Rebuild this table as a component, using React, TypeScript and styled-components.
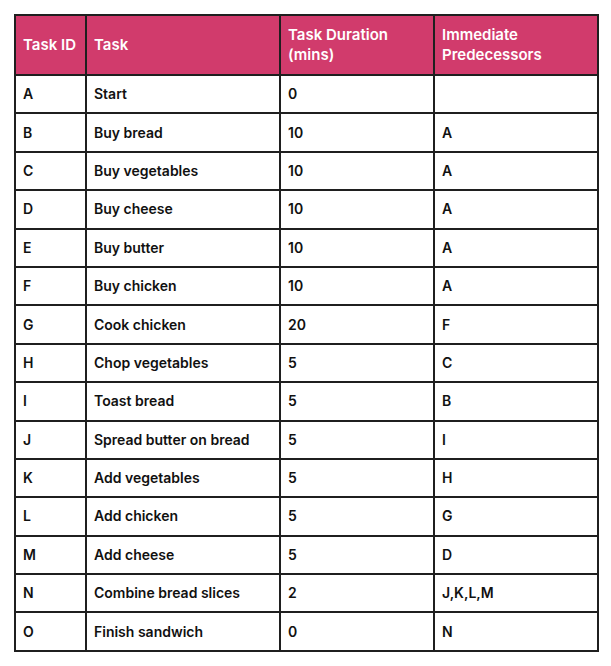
import React, { FC } from 'react';
import styled, { createGlobalStyle } from 'styled-components';

const GlobalStyle = createGlobalStyle`
  body {
    margin: 0;
    background: #ffffff;
    font-family: Inter, "Noto Sans", sans-serif;
  }
`;

const Page = styled.div`
  padding: 14px 0 0 14px;
`;

const Table = styled.table`
  width: 583px;
  border-collapse: collapse;
  table-layout: fixed;
  color: #111111;
`;

const Col = styled.col<{ $width: number }>`
  width: ${(p) => p.$width}px;
`;

const HeadRow = styled.tr`
  height: 60px;
  background: #d13b6c;
`;

const BodyRow = styled.tr`
  height: 38.4px;
`;

const HeadCell = styled.th`
  border: 2px solid #1f1f1f;
  padding: 0 7px;
  text-align: left;
  vertical-align: middle;
  color: #ffffff;
  font-size: 15px;
  font-weight: 600;
  line-height: 20px;
`;

const Cell = styled.td`
  border: 2px solid #1f1f1f;
  padding: 0 7px;
  vertical-align: middle;
  font-size: 14px;
  font-weight: 600;
  line-height: 18px;
  white-space: nowrap;
`;

type TTask = {
  id: string;
  task: string;
  duration: number;
  predecessors: string;
};

const columns = [
  { title: 'Task ID', width: 71 },
  { title: 'Task', width: 194 },
  { title: 'Task Duration (mins)', width: 154 },
  { title: 'Immediate Predecessors', width: 164 },
];

const tasks: TTask[] = [
  { id: 'A', task: 'Start', duration: 0, predecessors: '' },
  { id: 'B', task: 'Buy bread', duration: 10, predecessors: 'A' },
  { id: 'C', task: 'Buy vegetables', duration: 10, predecessors: 'A' },
  { id: 'D', task: 'Buy cheese', duration: 10, predecessors: 'A' },
  { id: 'E', task: 'Buy butter', duration: 10, predecessors: 'A' },
  { id: 'F', task: 'Buy chicken', duration: 10, predecessors: 'A' },
  { id: 'G', task: 'Cook chicken', duration: 20, predecessors: 'F' },
  { id: 'H', task: 'Chop vegetables', duration: 5, predecessors: 'C' },
  { id: 'I', task: 'Toast bread', duration: 5, predecessors: 'B' },
  { id: 'J', task: 'Spread butter on bread', duration: 5, predecessors: 'I' },
  { id: 'K', task: 'Add vegetables', duration: 5, predecessors: 'H' },
  { id: 'L', task: 'Add chicken', duration: 5, predecessors: 'G' },
  { id: 'M', task: 'Add cheese', duration: 5, predecessors: 'D' },
  { id: 'N', task: 'Combine bread slices', duration: 2, predecessors: 'J,K,L,M' },
  { id: 'O', task: 'Finish sandwich', duration: 0, predecessors: 'N' },
];

const App: FC = () => (
  <>
    <GlobalStyle />
    <Page>
      <Table>
        <colgroup>
          {columns.map((col) => (
            <Col key={col.title} $width={col.width} />
          ))}
        </colgroup>
        <thead>
          <HeadRow>
            {columns.map((col) => (
              <HeadCell key={col.title}>{col.title}</HeadCell>
            ))}
          </HeadRow>
        </thead>
        <tbody>
          {tasks.map((t) => (
            <BodyRow key={t.id}>
              <Cell>{t.id}</Cell>
              <Cell>{t.task}</Cell>
              <Cell>{t.duration}</Cell>
              <Cell>{t.predecessors}</Cell>
            </BodyRow>
          ))}
        </tbody>
      </Table>
    </Page>
  </>
);

export default App;
